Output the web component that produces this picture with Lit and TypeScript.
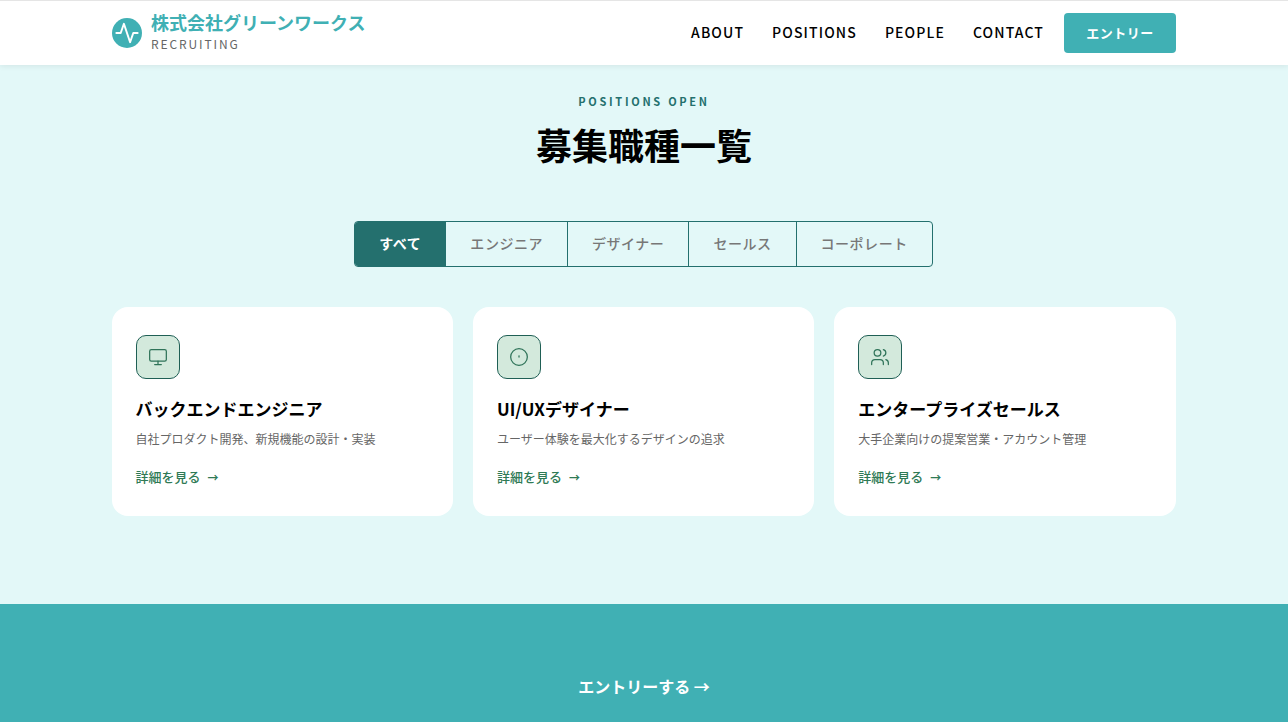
import { LitElement, html, css, svg } from "lit";
import { customElement } from "lit/decorators.js";

const icons = {
  monitor: svg`<rect x="2" y="3" width="20" height="14" rx="2"/><path d="M8 21h8M12 17v4"/>`,
  info: svg`<circle cx="12" cy="12" r="10"/><path d="M12 10.5v1.5"/>`,
  users: svg`<path d="M16 21v-2a4 4 0 0 0-4-4H6a4 4 0 0 0-4 4v2"/><circle cx="9" cy="7" r="4"/><path d="M22 21v-2a4 4 0 0 0-3-3.87M16 3.13a4 4 0 0 1 0 7.75"/>`,
};

const jobs = [
  { icon: icons.monitor, title: "バックエンドエンジニア", desc: "自社プロダクト開発、新規機能の設計・実装" },
  { icon: icons.info, title: "UI/UXデザイナー", desc: "ユーザー体験を最大化するデザインの追求" },
  { icon: icons.users, title: "エンタープライズセールス", desc: "大手企業向けの提案営業・アカウント管理" },
];

const tabs = ["すべて", "エンジニア", "デザイナー", "セールス", "コーポレート"];
const links = ["ABOUT", "POSITIONS", "PEOPLE", "CONTACT"];

@customElement("app-root")
export class AppRoot extends LitElement {
  static styles = css`
    :host {
      display: block;
      height: 722px;
      overflow: hidden;
      background: #e3f8f8;
      font-family: "Noto Sans CJK JP", "Noto Sans", sans-serif;
      color: #000;
    }
    .header {
      height: 64px;
      background: #fff;
      border-top: 1px solid #e5e5e5;
      box-shadow: 0 1px 6px rgba(0, 0, 0, 0.08);
      position: relative;
    }
    .bar {
      width: 1064px;
      margin: 0 auto;
      height: 64px;
      display: flex;
      align-items: center;
      justify-content: space-between;
    }
    .brand {
      display: flex;
      align-items: center;
      gap: 9px;
    }
    .logo {
      width: 30px;
      height: 30px;
      display: block;
    }
    .names {
      display: flex;
      flex-direction: column;
      padding-bottom: 5px;
    }
    .company {
      font-size: 18px;
      line-height: 24px;
      font-weight: 700;
      color: #40b0b4;
    }
    .sub {
      font-size: 12px;
      line-height: 16px;
      margin-top: 2px;
      letter-spacing: 1.9px;
      color: #666;
    }
    .nav {
      display: flex;
      align-items: center;
      gap: 28px;
    }
    .nav a {
      font-size: 14px;
      font-weight: 500;
      letter-spacing: 1.12px;
      color: #000;
      padding-bottom: 2px;
    }
    .entry {
      width: 112px;
      height: 40px;
      margin-left: -8px;
      padding-bottom: 1px;
      box-sizing: border-box;
      border-radius: 4px;
      background: #40b0b4;
      color: #fff;
      font-size: 13px;
      letter-spacing: 0.5px;
      font-weight: 700;
      display: flex;
      align-items: center;
      justify-content: center;
    }
    .main {
      height: 539px;
      display: flex;
      flex-direction: column;
      align-items: center;
    }
    .eyebrow {
      margin-top: 28px;
      font-size: 11px;
      line-height: 16px;
      font-weight: 700;
      letter-spacing: 2.7px;
      color: #24706e;
    }
    h1 {
      margin: 9px 0 0;
      font-size: 36px;
      line-height: 52px;
      font-weight: 700;
    }
    .tabs {
      margin: 51px 0 0 -1px;
      display: flex;
      height: 46px;
      box-sizing: border-box;
      border: 1px solid #24706e;
      border-radius: 4px;
      overflow: hidden;
    }
    .tab {
      padding: 0 24px 3px;
      display: flex;
      align-items: center;
      font-size: 14px;
      font-weight: 500;
      letter-spacing: 0.53px;
      color: #777;
      border-left: 1px solid #24706e;
    }
    .tab:first-child {
      border-left: 0;
    }
    .tab.on {
      background: #24706e;
      color: #fff;
      font-weight: 700;
    }
    .cards {
      width: 1064px;
      margin: 40px 0 0 -0.8px;
      display: grid;
      grid-template-columns: repeat(3, 1fr);
      gap: 20px;
    }
    .card {
      height: 209px;
      box-sizing: border-box;
      padding: 28px 24px;
      background: #fff;
      border-radius: 16px;
    }
    .icon {
      width: 44px;
      height: 44px;
      box-sizing: border-box;
      border: 1px solid #1f5f55;
      border-radius: 10px;
      background: #d3e9dc;
      display: flex;
      align-items: center;
      justify-content: center;
    }
    .icon svg {
      width: 20px;
      height: 20px;
      fill: none;
      stroke: #2f7359;
      stroke-width: 1.5;
      stroke-linecap: round;
      stroke-linejoin: round;
    }
    h3 {
      margin: 17px 0 0;
      font-size: 17px;
      line-height: 26px;
      font-weight: 700;
    }
    .desc {
      margin: 7px 0 0;
      font-size: 12px;
      line-height: 20px;
      color: #666;
    }
    .more {
      margin-top: 18px;
      font-size: 13px;
      line-height: 20px;
      font-weight: 500;
      color: #2f7a55;
      display: flex;
      align-items: center;
      gap: 7px;
    }
    .arrow {
      font-size: 11px;
      font-weight: 700;
    }
    .cta {
      height: 118px;
      background: #40b0b4;
      color: #fff;
      font-size: 16px;
      font-weight: 700;
      display: flex;
      justify-content: center;
      padding-top: 70px;
      box-sizing: border-box;
      line-height: 24px;
    }
  `;

  render() {
    return html`
      <div class="header">
        <div class="bar">
          <div class="brand">
            <svg class="logo" viewBox="0 0 31 31">
              <circle cx="15.5" cy="15.5" r="15.5" fill="#40b0b4" />
              <path d="M4.5 15.5h4.5l3.3-9.5 6.4 19 3.3-9.5h4.5" fill="none" stroke="#fff" stroke-width="2" stroke-linecap="round" stroke-linejoin="round" />
            </svg>
            <div class="names">
              <div class="company">株式会社グリーンワークス</div>
              <div class="sub">RECRUITING</div>
            </div>
          </div>
          <nav class="nav">
            ${links.map((l) => html`<a>${l}</a>`)}
            <div class="entry">エントリー</div>
          </nav>
        </div>
      </div>
      <main class="main">
        <div class="eyebrow">POSITIONS OPEN</div>
        <h1>募集職種一覧</h1>
        <div class="tabs">
          ${tabs.map((t, i) => html`<div class="tab ${i === 0 ? "on" : ""}">${t}</div>`)}
        </div>
        <div class="cards">
          ${jobs.map(
            (j) => html`<article class="card">
              <div class="icon"><svg viewBox="0 0 24 24">${j.icon}</svg></div>
              <h3>${j.title}</h3>
              <p class="desc">${j.desc}</p>
              <div class="more"><span>詳細を見る</span><span class="arrow">→</span></div>
            </article>`
          )}
        </div>
      </main>
      <section class="cta">エントリーする →</section>
    `;
  }
}
